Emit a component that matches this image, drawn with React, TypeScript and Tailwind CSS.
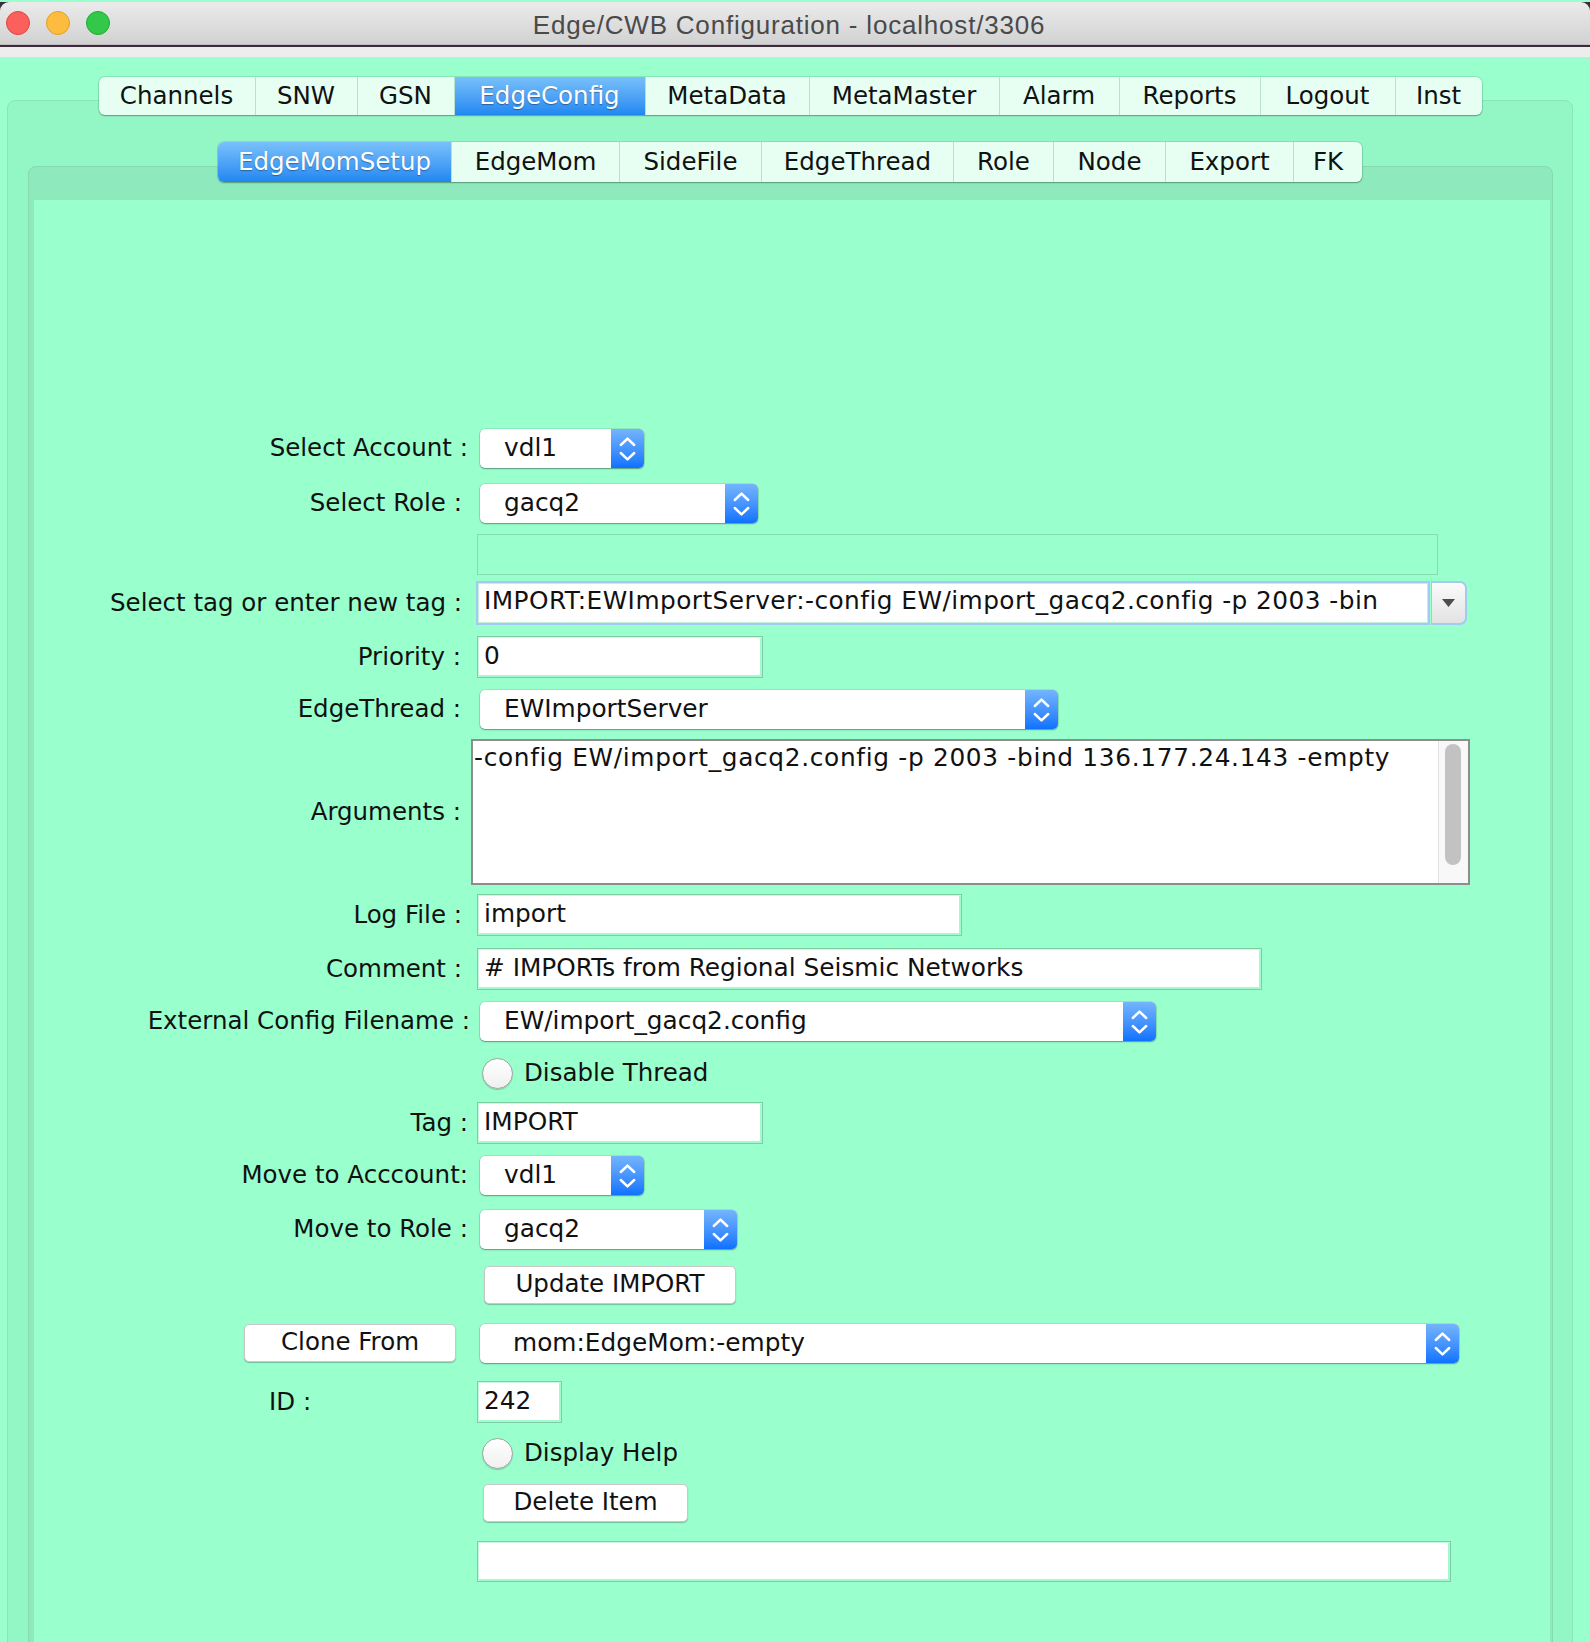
import React from "react";

const LBL = "w-[443px] shrink-0 text-right text-[24.5px] leading-none text-[#111]";

function Stepper() {
  return (
    <div className="w-[33px] h-full shrink-0 rounded-r-[5px] bg-gradient-to-b from-[#74b4fd] to-[#0a72fe] flex items-center justify-center">
      <svg width="33" height="39" viewBox="0 0 33 39">
        <path d="M9.8 16 L16.5 9.6 L23.2 16" stroke="white" strokeWidth="2.5" fill="none" strokeLinecap="round" strokeLinejoin="round" />
        <path d="M9.8 24 L16.5 30.4 L23.2 24" stroke="white" strokeWidth="2.5" fill="none" strokeLinecap="round" strokeLinejoin="round" />
      </svg>
    </div>
  );
}

function Combo({ w, text, pl = "pl-[24px]" }: { w: string; text: string; pl?: string }) {
  return (
    <div className={`flex h-[39px] rounded-[5px] bg-white shadow-[0_0_0_0.5px_rgba(0,0,0,0.15),0_1px_1.5px_rgba(0,0,0,0.35)] ${w}`}>
      <div className={`flex-1 flex items-center text-[24.8px] leading-none whitespace-nowrap overflow-hidden text-[#111] ${pl}`}>{text}</div>
      <Stepper />
    </div>
  );
}

function Field({ w, text = "", h = "h-[42px]" }: { w: string; text?: string; h?: string }) {
  return (
    <div className={`flex items-center border border-[#7ecda5] bg-white shadow-[inset_1px_1px_0_#cdf6e2,inset_-2px_-2px_0_#a2fbd0] pl-[6px] pb-[2px] text-[24.8px] leading-none whitespace-nowrap overflow-hidden text-[#111] ${w} ${h}`}>
      {text}
    </div>
  );
}

function Btn({ w, children }: { w: string; children: React.ReactNode }) {
  return (
    <div className={`flex h-[38px] items-center justify-center rounded-[5px] bg-white border border-[#c9c9c9] shadow-[0_1px_1px_rgba(0,0,0,0.25)] pb-[1px] text-[24.5px] leading-none text-[#111] ${w}`}>
      {children}
    </div>
  );
}

function Radio() {
  return (
    <div className="w-[31px] h-[31px] shrink-0 rounded-full border border-[#a3a3a3] bg-gradient-to-b from-white to-[#f0f0f0] shadow-[0_1px_1px_rgba(0,0,0,0.2)]" />
  );
}

type Tab = { t: string; w: string };

function Tabs({ tabs, sel, h }: { tabs: Tab[]; sel: number; h: string }) {
  return (
    <div className={`flex rounded-[6px] overflow-hidden bg-[#e6fff2] shadow-[0_0_0_1px_rgba(0,80,40,0.12),0_1px_1.5px_rgba(0,0,0,0.3)] ${h}`}>
      {tabs.map((tb, i) => (
        <div
          key={tb.t}
          className={`flex items-center justify-center text-[24.5px] leading-none ${tb.w} ${i > 0 ? "border-l border-[#b6e3cb]" : ""} ${
            i === sel
              ? "bg-gradient-to-b from-[#78c0fa] to-[#1e87f1] text-white [text-shadow:0_1px_1px_rgba(0,0,0,0.35)]"
              : "text-[#111]"
          }`}
        >
          {tb.t}
        </div>
      ))}
    </div>
  );
}

const mainTabs: Tab[] = [
  { t: "Channels", w: "w-[156px]" },
  { t: "SNW", w: "w-[102px]" },
  { t: "GSN", w: "w-[97px]" },
  { t: "EdgeConfig", w: "w-[191px]" },
  { t: "MetaData", w: "w-[164px]" },
  { t: "MetaMaster", w: "w-[190px]" },
  { t: "Alarm", w: "w-[120px]" },
  { t: "Reports", w: "w-[141px]" },
  { t: "Logout", w: "w-[135px]" },
  { t: "Inst", w: "w-[87px]" },
];

const subTabs: Tab[] = [
  { t: "EdgeMomSetup", w: "w-[233px]" },
  { t: "EdgeMom", w: "w-[168px]" },
  { t: "SideFile", w: "w-[142px]" },
  { t: "EdgeThread", w: "w-[192px]" },
  { t: "Role", w: "w-[100px]" },
  { t: "Node", w: "w-[112px]" },
  { t: "Export", w: "w-[128px]" },
  { t: "FK", w: "w-[69px]" },
];

export default function App() {
  return (
    <div className="w-[1590px] h-[1642px] overflow-hidden bg-[#99ffcc] font-['DejaVu_Sans',sans-serif]">
      {/* title bar */}
      <div className="h-[45px] bg-[#3d2b3b]">
        <div className="mt-[2px] h-[43px] rounded-t-[9px] bg-gradient-to-b from-[#ebebeb] to-[#d2d2d2] border-b border-[#bdbdbd] flex items-center font-['Liberation_Sans',Arial,sans-serif]">
          <div className="w-[110px] shrink-0 flex items-center gap-[16px] pl-[6px]">
            <div className="w-[24px] h-[24px] rounded-full bg-[#fc605c] border border-[#e0443e]" />
            <div className="w-[24px] h-[24px] rounded-full bg-[#fdbc40] border border-[#dea123]" />
            <div className="w-[24px] h-[24px] rounded-full bg-[#34c84a] border border-[#1dad2b]" />
          </div>
          <div className="flex-1 pt-[3px] text-center text-[26px] tracking-[0.8px] leading-none text-[#4a4a4a]">
            Edge/CWB Configuration - localhost/3306
          </div>
          <div className="w-[122px] shrink-0" />
        </div>
      </div>
      <div className="h-[10px] bg-[#ededed]" />

      {/* green area */}
      <div className="pl-[7px] pr-[17px] pt-[20px]">
        <div className="relative z-10 flex justify-center">
          <Tabs tabs={mainTabs} sel={3} h="h-[38px]" />
        </div>
        <div className="mt-[-15px] h-[1600px] rounded-[8px] border border-[#8ae6b9] bg-[#93f6c5] pt-[41px]">
          <div className="relative z-10 flex justify-center">
            <Tabs tabs={subTabs} sel={0} h="h-[40px]" />
          </div>
          <div className="mt-[-16px] ml-[20px] mr-[19px] h-[1540px] rounded-[8px] border border-[#84dbb0] bg-[#8ee9bc] pt-[33px] pl-[5px] pr-[2px]">
            <div className="h-[1500px] bg-[#99ffcc] flex flex-col">
              {/* Select Account */}
              <div className="mt-[229px] flex h-[39px] items-center">
                <div className={`${LBL} pr-[9px]`}>Select Account :</div>
                <div className="ml-[3px]"><Combo w="w-[164px]" text="vdl1" /></div>
              </div>
              {/* Select Role */}
              <div className="mt-[16px] flex h-[39px] items-center">
                <div className={`${LBL} pr-[15px]`}>Select Role :</div>
                <div className="ml-[3px]"><Combo w="w-[278px]" text="gacq2" /></div>
              </div>
              {/* empty box */}
              <div className="mt-[11px] flex h-[41px] items-center">
                <div className="w-[443px] shrink-0" />
                <div className="w-[961px] h-[41px] border border-[#85dcb0]" />
              </div>
              {/* Select tag */}
              <div className="mt-[6px] flex h-[44px] items-center">
                <div className={`${LBL} pr-[15px]`}>Select tag or enter new tag :</div>
                <div className="ml-[-1px] flex h-[44px] w-[991px]">
                  <div className="flex-1 flex items-center bg-white border-[2px] border-[#a3cbf1] shadow-[inset_0_0_0_1px_#c6eedb] pl-[6px] pb-[3px] text-[24.8px] tracking-[0.45px] leading-none whitespace-nowrap overflow-hidden text-[#111]">
                    IMPORT:EWImportServer:-config EW/import_gacq2.config -p 2003 -bin
                  </div>
                  <div className="ml-[1px] w-[36px] rounded-r-[7px] border-[2px] border-l-[1px] border-[#a3cbf1] bg-gradient-to-b from-[#fbfbfb] to-[#e2e2e2] flex items-center justify-center">
                    <svg width="13" height="8" viewBox="0 0 13 8">
                      <path d="M0 0 L13 0 L6.5 8 Z" fill="#4d4d4d" />
                    </svg>
                  </div>
                </div>
              </div>
              {/* Priority */}
              <div className="mt-[11px] flex h-[42px] items-center">
                <div className={`${LBL} pr-[16px]`}>Priority :</div>
                <Field w="w-[286px]" text="0" />
              </div>
              {/* EdgeThread */}
              <div className="mt-[12px] flex h-[39px] items-center">
                <div className={`${LBL} pr-[16px]`}>EdgeThread :</div>
                <div className="ml-[3px]"><Combo w="w-[578px]" text="EWImportServer" /></div>
              </div>
              {/* Arguments */}
              <div className="mt-[10px] flex h-[146px] items-center">
                <div className={`${LBL} pr-[16px]`}>Arguments :</div>
                <div className="ml-[-6px] flex h-[146px] w-[999px] border-[2px] border-[#8d8d8d] bg-white">
                  <div className="flex-1 pl-[1px] pt-[2px] text-[24.8px] tracking-[0.68px] leading-[30px] whitespace-nowrap overflow-hidden text-[#111]">
                    -config EW/import_gacq2.config -p 2003 -bind 136.177.24.143 -empty
                  </div>
                  <div className="w-[30px] h-full border-l border-[#e4e4e4] bg-[#f8f8f8] pl-[6px] pt-[3px]">
                    <div className="w-[16px] h-[121px] rounded-full bg-[#c2c2c2]" />
                  </div>
                </div>
              </div>
              {/* Log File */}
              <div className="mt-[9px] flex h-[42px] items-center">
                <div className={`${LBL} pr-[15px]`}>Log File :</div>
                <Field w="w-[485px]" text="import" />
              </div>
              {/* Comment */}
              <div className="mt-[12px] flex h-[42px] items-center">
                <div className={`${LBL} pr-[15px]`}>Comment :</div>
                <Field w="w-[785px]" text="# IMPORTs from Regional Seismic Networks" />
              </div>
              {/* External Config */}
              <div className="mt-[12px] flex h-[39px] items-center">
                <div className={`${LBL} pr-[7px]`}>External Config Filename :</div>
                <div className="ml-[3px]"><Combo w="w-[676px]" text="EW/import_gacq2.config" /></div>
              </div>
              {/* Disable Thread */}
              <div className="mt-[17px] flex h-[31px] items-center">
                <div className="w-[443px] shrink-0" />
                <div className="ml-[5px] flex items-center gap-[11px]">
                  <Radio />
                  <span className="text-[24.5px] leading-none text-[#111]">Disable Thread</span>
                </div>
              </div>
              {/* Tag */}
              <div className="mt-[13px] flex h-[42px] items-center">
                <div className={`${LBL} pr-[9px]`}>Tag :</div>
                <Field w="w-[286px]" text="IMPORT" />
              </div>
              {/* Move to Account */}
              <div className="mt-[11px] flex h-[40px] items-center">
                <div className={`${LBL} pr-[9px]`}>Move to Acccount:</div>
                <div className="ml-[3px]"><Combo w="w-[164px]" text="vdl1" /></div>
              </div>
              {/* Move to Role */}
              <div className="mt-[15px] flex h-[39px] items-center">
                <div className={`${LBL} pr-[9px]`}>Move to Role :</div>
                <div className="ml-[3px]"><Combo w="w-[257px]" text="gacq2" /></div>
              </div>
              {/* Update */}
              <div className="mt-[17px] flex h-[38px] items-center">
                <div className="w-[443px] shrink-0" />
                <div className="ml-[7px]"><Btn w="w-[252px]">Update IMPORT</Btn></div>
              </div>
              {/* Clone From */}
              <div className="mt-[19px] flex h-[40px] items-center">
                <div className="w-[443px] shrink-0 pl-[210px]"><Btn w="w-[212px]">Clone From</Btn></div>
                <div className="ml-[3px]"><Combo w="w-[979px]" text="mom:EdgeMom:-empty" pl="pl-[33px]" /></div>
              </div>
              {/* ID */}
              <div className="mt-[18px] flex h-[42px] items-center">
                <div className="w-[443px] shrink-0 pl-[235px] text-[24.5px] leading-none text-[#111]">ID :</div>
                <Field w="w-[85px]" text="242" />
              </div>
              {/* Display Help */}
              <div className="mt-[15px] flex h-[31px] items-center">
                <div className="w-[443px] shrink-0" />
                <div className="ml-[5px] flex items-center gap-[11px]">
                  <Radio />
                  <span className="text-[24.5px] leading-none text-[#111]">Display Help</span>
                </div>
              </div>
              {/* Delete */}
              <div className="mt-[15px] flex h-[38px] items-center">
                <div className="w-[443px] shrink-0" />
                <div className="ml-[6px]"><Btn w="w-[205px]">Delete Item</Btn></div>
              </div>
              {/* bottom field */}
              <div className="mt-[19px] flex h-[41px] items-center">
                <div className="w-[443px] shrink-0" />
                <Field w="w-[974px]" h="h-[41px]" />
              </div>
            </div>
          </div>
        </div>
      </div>
    </div>
  );
}
